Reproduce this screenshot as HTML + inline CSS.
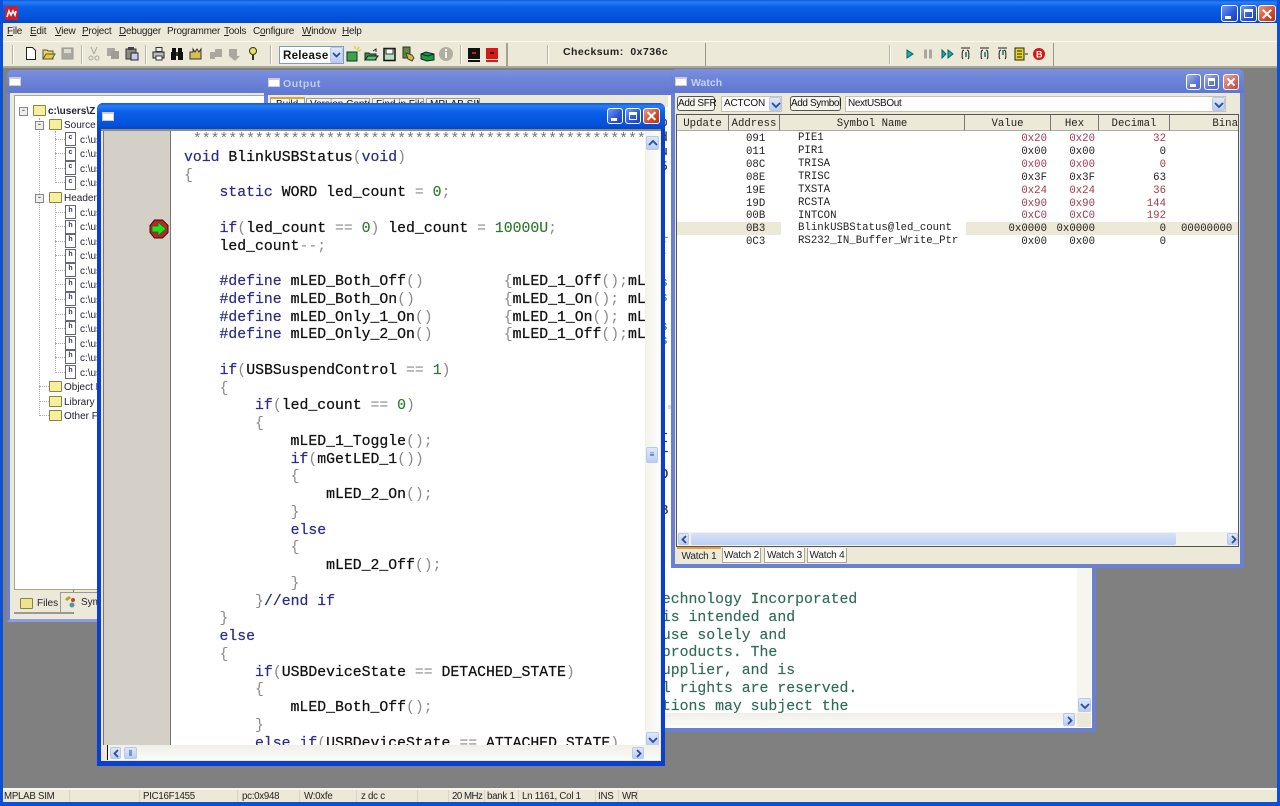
<!DOCTYPE html>
<html><head><meta charset="utf-8"><title>MPLAB IDE</title>
<style>
html,body{margin:0;padding:0;width:1280px;height:806px;overflow:hidden;background:#808080}
*{box-sizing:border-box}
body{position:relative;font-family:"Liberation Sans",sans-serif;font-size:10px;color:#111}
.a{position:absolute;white-space:pre}
.m{font-family:"Liberation Mono",monospace}
.btn{position:absolute;border:1px solid #fff;border-radius:3px;background:linear-gradient(135deg,#6f9bf5,#2a55d8 60%,#1c3fc0)}
.btn.x{background:linear-gradient(135deg,#eb9a80,#d2492a 60%,#b83212)}
.btn.ina{background:linear-gradient(135deg,#a3b4ee,#5e76d6 60%,#5169cf)}
.btn.xina{background:linear-gradient(135deg,#e5a6a0,#d06a62 60%,#b94a48)}
.min:after{content:"";position:absolute;left:3px;bottom:2px;width:6px;height:3px;background:#fff}
.max:after{content:"";position:absolute;left:3px;top:3px;right:3px;bottom:3px;border:1px solid #fff;border-top-width:3px}
.cl:before,.cl:after{content:"";position:absolute;left:2px;right:2px;top:50%;height:2px;margin-top:-1px;background:#fff;transform:rotate(45deg)}
.cl:after{transform:rotate(-45deg)}
.ic{position:absolute;width:12px;height:9px;background:#fff;border:1px solid #ccd;border-top-width:2px}
.t{position:absolute;white-space:pre;font-size:10px;color:#223;margin-top:2px}
.fold{position:absolute;width:13px;height:11px;background:#f5ef9e;border:1px solid #8a8440;border-radius:1px;margin-top:1px}
.doc{position:absolute;width:11px;height:14px;background:#fff;border:1px solid #667;font:bold 7px/9px "Liberation Sans";text-align:center;color:#336}
.pm{position:absolute;width:9px;height:9px;border:1px solid #888;background:#eee;font:9px/6px "Liberation Mono";text-align:center;color:#333;margin-top:1px}
.dh{position:absolute;border-top:1px dotted #aaa;height:0}
.dv{position:absolute;border-left:1px dotted #aaa;width:0}
.code{position:absolute;left:171px;top:131px;width:474px;height:614px;overflow:hidden;background:#fff}
.code pre{position:absolute;left:13px;top:1px;margin:0;font:14.8px/17.75px "Liberation Mono",monospace;color:#111;-webkit-text-stroke:.25px #111}
.code b{font-weight:normal;color:#2b2b88;-webkit-text-stroke:.2px #2b2b88}
.code i{font-style:normal;color:#8a8a8a;-webkit-text-stroke:0}
.code u{text-decoration:none;color:#2a7a2a;-webkit-text-stroke:.15px #2a7a2a}
.code s{text-decoration:none;color:#777;-webkit-text-stroke:0}
.ot{position:absolute;font:14.8px/17.75px "Liberation Mono",monospace;color:#2f6b55;white-space:pre;margin:0;-webkit-text-stroke:.15px #2f6b55}
.sb{position:absolute;border:1px solid #b6c8ee;border-radius:2px;background:linear-gradient(#dfe8fb,#b9cdf5);color:#2c4a96;text-align:center;font:bold 9px/11px "Liberation Sans"}
.hd{position:absolute;top:115px;height:16px;background:#ece9d8;border-right:1px solid #777;border-bottom:1px solid #aaa;font:10.7px/19px "Liberation Mono",monospace;text-align:center;color:#222;overflow:hidden;white-space:pre}
.r{position:absolute;font:10.7px/13px "Liberation Mono",monospace;color:#222;white-space:pre;margin-top:1px}
.rr{color:#a33a4a}
.tab{position:absolute;top:548px;height:15px;background:#fbfaf4;border:1px solid #a9a695;border-top:0;font:10px/15px "Liberation Sans";text-align:center;letter-spacing:-.2px;color:#222}
.st{position:absolute;top:791px;font:9.7px/12px "Liberation Sans";color:#222;white-space:pre;letter-spacing:-.25px}
.sp{position:absolute;top:790px;height:12px;width:1px;background:#d8d5c5}
.mn{position:absolute;top:26px;font:10px/12px "Liberation Sans";color:#222;white-space:pre;letter-spacing:-.25px}
.sep{position:absolute;top:45px;height:19px;width:2px;border-left:1px solid #b5b29f;border-right:1px solid #fff}
svg{position:absolute;overflow:visible}
.sb svg path{fill:none;stroke:#2c4a96;stroke-width:1.8}
</style></head><body>

<!-- main frame -->
<div class="a" style="left:0;top:0;width:1280px;height:23px;background:linear-gradient(#0a5ae0,#2a7df5 10%,#0b5fe8 30%,#0453dc 75%,#0447c8)"></div>
<div class="a" style="left:0;top:0;width:3px;height:806px;background:#0a50d8"></div>
<div class="a" style="right:0;top:0;width:3px;height:806px;background:#0a50d8"></div>
<div class="a" style="left:0;top:802px;width:1280px;height:4px;background:#0a50d8"></div>
<svg style="left:5px;top:5px" width="14" height="15"><rect width="13" height="14" y="1" fill="#c8202c"/><path d="M2 12L4 6l2 4 2-4 2 4 1-4" stroke="#fff" stroke-width="1.6" fill="none"/></svg>
<div class="btn min" style="left:1221px;top:5px;width:17px;height:17px"></div>
<div class="btn max" style="left:1240px;top:5px;width:17px;height:17px"></div>
<div class="btn x cl" style="left:1258px;top:5px;width:18px;height:17px"></div>

<!-- menu -->
<div class="a" style="left:3px;top:23px;width:1274px;height:18px;background:#ece9d8"></div>
<span class="mn" style="left:7px"><span style="text-decoration:underline">F</span>ile</span>
<span class="mn" style="left:30px"><span style="text-decoration:underline">E</span>dit</span>
<span class="mn" style="left:55px"><span style="text-decoration:underline">V</span>iew</span>
<span class="mn" style="left:82px"><span style="text-decoration:underline">P</span>roject</span>
<span class="mn" style="left:119px"><span style="text-decoration:underline">D</span>ebugger</span>
<span class="mn" style="left:167px">Programmer</span>
<span class="mn" style="left:224px"><span style="text-decoration:underline">T</span>ools</span>
<span class="mn" style="left:253px">C<span style="text-decoration:underline">o</span>nfigure</span>
<span class="mn" style="left:302px"><span style="text-decoration:underline">W</span>indow</span>
<span class="mn" style="left:342px"><span style="text-decoration:underline">H</span>elp</span>

<!-- toolbar -->
<div class="a" style="left:3px;top:41px;width:1274px;height:27px;background:#ece9d8;border-top:1px solid #fbfaf3;border-bottom:2px solid #a9a795"></div>
<div class="sep" style="left:12px"></div>
<div class="sep" style="left:81px"></div>
<div class="sep" style="left:145px"></div>
<div class="sep" style="left:270px"></div>
<div class="sep" style="left:460px"></div>
<div class="a" style="left:506px;top:43px;width:2px;height:23px;background:#a5a28f"></div>
<div class="sep" style="left:547px"></div>
<div class="a" style="left:705px;top:43px;width:1px;height:23px;background:#99968a"></div>
<div class="sep" style="left:889px"></div>
<div class="a" style="left:1053px;top:43px;width:1px;height:23px;background:#99968a"></div>

<svg style="left:25px;top:46px" width="240" height="16">
 <path d="M1.500 1.500h6l3 3v9h-9z" fill="#fff" stroke="#222"/>
 <path d="M18 13V4h4l1 1h5v8z" fill="#f0d860" stroke="#554"/><path d="M18 13l3-5h9l-3 5z" fill="#e8c840" stroke="#554"/>
 <rect x="37" y="2" width="11" height="11" fill="#aaa8a0" stroke="#999"/><rect x="39" y="3" width="7" height="4" fill="#dcdad0"/>
 <path d="M66 1l3 7M72 1l-3 7" stroke="#a8a89c"/><circle cx="66" cy="12" r="2" fill="none" stroke="#a8a89c"/><circle cx="72" cy="12" r="2" fill="none" stroke="#a8a89c"/>
 <rect x="82" y="2" width="8" height="8" fill="#aaa89e"/><rect x="86" y="5" width="8" height="8" fill="#9f9d93"/>
 <rect x="101" y="3" width="10" height="10" fill="#8d8b7e" stroke="#333"/><rect x="103" y="1" width="6" height="3" fill="#444"/><rect x="106" y="7" width="7" height="7" fill="#c8ccf0" stroke="#223"/>
 <path d="M128 6h11v6h-11z" fill="#bbb" stroke="#222"/><rect x="131" y="1.500" width="6" height="4" fill="#eee" stroke="#333"/><rect x="131" y="10" width="6" height="4" fill="#fff" stroke="#333"/>
 <rect x="147" y="2" width="4" height="5" fill="#111"/><rect x="153" y="2" width="4" height="5" fill="#111"/><rect x="146" y="6" width="5" height="8" fill="#111"/><rect x="153" y="6" width="5" height="8" fill="#111"/><rect x="151" y="6" width="2" height="4" fill="#333"/>
 <path d="M165 13V6h3v-3l2 3 2-3 2 3 2-3v10z" fill="#d8c050" stroke="#333"/>
 <path d="M185 13V6h5V3h7v8h-7v2z" fill="#aaa89e"/>
 <path d="M204 3h8v7h3l-5 5-6-5z" fill="#aaa89e"/>
 <circle cx="228" cy="5" r="3.500" fill="#e8e060" stroke="#332"/><path d="M228 9v5" stroke="#332" stroke-width="2"/>
</svg>
<div class="a" style="left:279px;top:46px;width:65px;height:18px;background:#fff;border:1px solid #7f9db9;font:bold 11.5px/18px 'Liberation Sans';padding-left:3px;letter-spacing:.3px">Release</div>
<div class="sb" style="left:330px;top:47px;width:13px;height:16px"><svg style="left:1px;top:4px" width="9" height="6"><path d="M1 1l3.500 3.500L8 1"/></svg></div>
<svg style="left:346px;top:45px" width="160" height="18">
 <path d="M1 7h10v9H1z" fill="#3da34a" stroke="#133"/><path d="M11 5l2-3M12 6l3-1M9 4l0-3" stroke="#d8c840" stroke-width="1.400"/>
 <path d="M19 15V8h4l1 1h6v6z" fill="#2f9a44" stroke="#122"/><path d="M19 15l3-4h10l-3 4z" fill="#5cbf6c" stroke="#122"/><path d="M27 6l3-2v3" stroke="#222" fill="none"/>
 <rect x="38" y="3.500" width="11" height="12" fill="#b9dcb9" stroke="#111" stroke-width="1.500"/><rect x="40" y="4" width="7" height="5" fill="#fff" stroke="#333"/>
 <rect x="57" y="2" width="7" height="11" fill="#5b8a3a" stroke="#332"/><path d="M60 8l6 2 2 3-2 3-4-2z" fill="#d4b840" stroke="#443"/>
 <path d="M75 9l5-2 8 2v6l-7 1-6-2z" fill="#1a9a3a" stroke="#123"/><path d="M75 9l7 2 6-2" stroke="#123" fill="none"/>
 <circle cx="100" cy="9" r="7" fill="#b0aea3"/><rect x="99" y="7" width="2" height="6" fill="#f4f3ea"/><rect x="99" y="4" width="2" height="2" fill="#f4f3ea"/>
 <rect x="122" y="3" width="12" height="11" fill="#111"/><rect x="126" y="7" width="4" height="2" fill="#d01818"/><rect x="122" y="15" width="12" height="2" fill="#111"/>
 <rect x="140" y="3" width="12" height="11" fill="#d81818"/><rect x="144" y="7" width="4" height="2" fill="#400"/><rect x="140" y="15" width="12" height="2" fill="#d81818"/>
</svg>
<div class="a" style="left:563px;top:46px;font:bold 10.5px/13px 'Liberation Sans';color:#222;letter-spacing:.45px">Checksum:  0x736c</div>
<svg style="left:905px;top:47px" width="145" height="14">
 <path d="M2 3l6 4-6 4z" fill="#18b0a8" stroke="#06606a"/>
 <rect x="19" y="2.500" width="3" height="9" fill="#aaa89e"/><rect x="24" y="2.500" width="3" height="9" fill="#aaa89e"/>
 <path d="M37 3l4 4-4 4zM43 3l5 4-5 4z" fill="#18b0a8" stroke="#06606a"/>
 <g fill="none" stroke="#222"><path d="M56 1h9M58 12c-2-2 0-4-1-5 1-1-1-3 2-4M63 12c2-2 0-4 1-5-1-1 1-3-2-4"/>
 <path d="M75 1h9M77 12c-2-2 0-4-1-5 1-1-1-3 2-4M82 12c2-2 0-4 1-5-1-1 1-3-2-4"/>
 <path d="M93 1h9M95 12c-2-2 0-4-1-5 1-1-1-3 2-4M100 12c2-2 0-4 1-5-1-1 1-3-2-4"/></g>
 <path d="M61 5v5M80 5v5M98 3v5" stroke="#14706a" stroke-width="1.500"/>
 <rect x="110" y="1" width="9" height="12" fill="#e8d820" stroke="#222"/><path d="M112 4h5M112 7h5M112 10h5M120 7h3" stroke="#222"/>
 <circle cx="134" cy="7" r="6" fill="#d01818"/><text x="131" y="10.500" font-family="Liberation Sans" font-size="9" font-weight="bold" fill="#fff">B</text>
</svg>

<!-- MDI -->
<div class="a" style="left:3px;top:68px;width:1274px;height:720px;background:#808080"></div>
<div class="a" style="left:3px;top:788px;width:1274px;height:14px;background:#ece9d8;border-top:2px solid #f7f6ee"></div>
<span class="st" style="left:4px">MPLAB SIM</span><div class="sp" style="left:69px"></div>
<div class="sp" style="left:139px"></div><span class="st" style="left:143px">PIC16F1455</span>
<div class="sp" style="left:237px"></div><span class="st" style="left:242px">pc:0x948</span>
<div class="sp" style="left:299px"></div><span class="st" style="left:304px">W:0xfe</span>
<div class="sp" style="left:356px"></div><span class="st" style="left:361px">z dc c</span>
<div class="sp" style="left:417px"></div><div class="sp" style="left:448px"></div><span class="st" style="left:452px;letter-spacing:-.5px">20 MHz</span>
<div class="sp" style="left:484px"></div><span class="st" style="left:487px">bank 1</span>
<div class="sp" style="left:518px"></div><span class="st" style="left:522px">Ln 1161, Col 1</span>
<div class="sp" style="left:595px"></div><span class="st" style="left:598px">INS</span>
<div class="sp" style="left:618px"></div><span class="st" style="left:622px">WR</span>
<div class="sp" style="left:637px"></div>

<!-- project window -->
<div class="a" style="left:7px;top:70px;width:270px;height:552px;background:#ece9d8;border:3px solid #6a80d4;border-top:0;border-radius:5px 5px 0 0;border-bottom-color:#8c9ee0"></div>
<div class="a" style="left:7px;top:70px;width:270px;height:23px;background:linear-gradient(#7b90de,#6d84d8 40%,#5f78d0);border-radius:5px 5px 0 0"></div>
<div class="ic" style="left:9px;top:77px"></div>
<div class="a" style="left:14px;top:95px;width:255px;height:495px;background:#fff;border:1px solid #a8a592"></div>

<div class="dv" style="left:39px;top:118px;height:298px"></div>
<div class="dv" style="left:55px;top:131px;height:52px"></div>
<div class="dv" style="left:55px;top:204px;height:169px"></div>
<div class="pm" style="left:19px;top:106px">-</div>
<div class="fold" style="left:33px;top:104px"></div>
<div class="t" style="left:48px;top:104px;font-weight:bold">c:\users\Z</div>
<div class="pm" style="left:35px;top:120px">-</div><div class="fold" style="left:49px;top:118px"></div><div class="t" style="left:64px;top:118px">Source F</div>
<div class="dh" style="left:55px;top:139px;width:10px"></div><div class="doc" style="left:65px;top:132px">c</div><div class="t" style="left:80px;top:133px">c:\us</div>
<div class="dh" style="left:55px;top:153px;width:10px"></div><div class="doc" style="left:65px;top:147px">c</div><div class="t" style="left:80px;top:147px">c:\us</div>
<div class="dh" style="left:55px;top:168px;width:10px"></div><div class="doc" style="left:65px;top:161px">c</div><div class="t" style="left:80px;top:162px">c:\us</div>
<div class="dh" style="left:55px;top:182px;width:10px"></div><div class="doc" style="left:65px;top:176px">c</div><div class="t" style="left:80px;top:176px">c:\us</div>
<div class="pm" style="left:35px;top:193px">-</div><div class="fold" style="left:49px;top:191px"></div><div class="t" style="left:64px;top:191px">Header F</div>
<div class="dh" style="left:55px;top:212px;width:10px"></div><div class="doc" style="left:65px;top:205px">h</div><div class="t" style="left:80px;top:206px">c:\us</div>
<div class="dh" style="left:55px;top:226px;width:10px"></div><div class="doc" style="left:65px;top:220px">h</div><div class="t" style="left:80px;top:220px">c:\us</div>
<div class="dh" style="left:55px;top:241px;width:10px"></div><div class="doc" style="left:65px;top:234px">h</div><div class="t" style="left:80px;top:235px">c:\us</div>
<div class="dh" style="left:55px;top:255px;width:10px"></div><div class="doc" style="left:65px;top:249px">h</div><div class="t" style="left:80px;top:249px">c:\us</div>
<div class="dh" style="left:55px;top:270px;width:10px"></div><div class="doc" style="left:65px;top:263px">h</div><div class="t" style="left:80px;top:264px">c:\us</div>
<div class="dh" style="left:55px;top:284px;width:10px"></div><div class="doc" style="left:65px;top:278px">h</div><div class="t" style="left:80px;top:278px">c:\us</div>
<div class="dh" style="left:55px;top:299px;width:10px"></div><div class="doc" style="left:65px;top:292px">h</div><div class="t" style="left:80px;top:293px">c:\us</div>
<div class="dh" style="left:55px;top:314px;width:10px"></div><div class="doc" style="left:65px;top:307px">h</div><div class="t" style="left:80px;top:308px">c:\us</div>
<div class="dh" style="left:55px;top:328px;width:10px"></div><div class="doc" style="left:65px;top:321px">h</div><div class="t" style="left:80px;top:322px">c:\us</div>
<div class="dh" style="left:55px;top:343px;width:10px"></div><div class="doc" style="left:65px;top:336px">h</div><div class="t" style="left:80px;top:337px">c:\us</div>
<div class="dh" style="left:55px;top:357px;width:10px"></div><div class="doc" style="left:65px;top:350px">h</div><div class="t" style="left:80px;top:351px">c:\us</div>
<div class="dh" style="left:55px;top:372px;width:10px"></div><div class="doc" style="left:65px;top:365px">h</div><div class="t" style="left:80px;top:366px">c:\us</div>
<div class="dh" style="left:39px;top:386px;width:10px"></div><div class="fold" style="left:49px;top:380px"></div><div class="t" style="left:64px;top:380px">Object F</div>
<div class="dh" style="left:39px;top:401px;width:10px"></div><div class="fold" style="left:49px;top:395px"></div><div class="t" style="left:64px;top:395px">Library F</div>
<div class="dh" style="left:39px;top:415px;width:10px"></div><div class="fold" style="left:49px;top:409px"></div><div class="t" style="left:64px;top:409px">Other Fil</div>

<div class="a" style="left:14px;top:590px;width:60px;height:24px;background:#ece9d8;border-right:1px solid #777;border-bottom:2px solid #999"></div>
<div class="fold" style="left:20px;top:597px;background:#efe48e"></div><div class="t" style="left:37px;top:596px">Files</div>
<div class="a" style="left:60px;top:592px;width:50px;height:20px;background:#ece9d8;border:1px solid #999;border-bottom:0"></div>
<svg style="left:64px;top:595px" width="14" height="14"><path d="M1 4l4-3 2 2-4 3z" fill="#b8a020"/><circle cx="9" cy="5" r="2" fill="#c04040"/><circle cx="8" cy="10" r="2.500" fill="#4a9a9a"/></svg>
<div class="t" style="left:81px;top:595px">Sym</div>

<!-- output window -->
<div class="a" style="left:264px;top:70px;width:832px;height:662px;background:#fff;border:4px solid #6a80d4;border-top:0;border-radius:5px 5px 0 0"></div>
<div class="a" style="left:264px;top:70px;width:420px;height:25px;background:linear-gradient(#7b90de,#6d84d8 40%,#5f78d0);border-radius:5px 5px 0 0"></div>
<div class="ic" style="left:268px;top:78px"></div>
<div class="a" style="left:283px;top:78px;font:bold 10.5px/13px 'Liberation Sans';color:#c0cdf0;letter-spacing:.6px">Output</div>
<div class="a" style="left:268px;top:95px;width:400px;height:12px;background:#ece9d8"></div>
<div class="a" style="left:270px;top:97px;width:35px;height:10px;background:#fbfaf4;border:1px solid #999;border-top:2px solid #e8a030;font:10px/12px 'Liberation Sans';padding-left:5px;overflow:hidden">Build</div>
<div class="a" style="left:306px;top:98px;width:64px;height:9px;background:#f3f1e6;border:1px solid #999;font:10px/11px 'Liberation Sans';padding-left:3px;overflow:hidden">Version Control</div>
<div class="a" style="left:372px;top:98px;width:52px;height:9px;background:#f3f1e6;border:1px solid #999;font:10px/11px 'Liberation Sans';padding-left:3px;overflow:hidden">Find in Files</div>
<div class="a" style="left:426px;top:98px;width:54px;height:9px;background:#f3f1e6;border:1px solid #999;font:10px/11px 'Liberation Sans';padding-left:3px;overflow:hidden">MPLAB SIM</div>
<div class="a" style="left:668px;top:405px;width:425px;height:4px;background:#dcdaca"></div>

<!-- strip text fragments between editor and watch -->
<div class="a" style="left:665px;top:104px;width:7px;height:410px;overflow:hidden">
 <pre class="ot" style="left:-5px;top:12px;font-size:13px;line-height:14.5px;color:#223">p
d
u
5</pre>
 <pre class="ot" style="left:-5px;top:122px;font-size:13px;color:#1f7a8a;line-height:14.5px">_
(
</pre>
 <pre class="ot" style="left:-5px;top:172px;font-size:13px;color:#1f7a8a;line-height:14.5px">s
s

s
s</pre>
 <pre class="ot" style="left:-5px;top:326px;color:#223;font-size:14px;line-height:18px">I
T
O

B</pre>
</div>

<!-- output green text -->
<pre class="ot" style="left:653px;top:592px">Technology Incorporated
 is intended and
 use solely and
 products. The
 upplier, and is
 l rights are reserved.
 tions may subject the</pre>
<div class="a" style="left:1077px;top:567px;width:14px;height:146px;background:#f6f5ee"></div>
<div class="sb" style="left:1078px;top:698px;width:13px;height:14px"><svg style="left:1px;top:4px" width="9" height="6"><path d="M1 1l4 4 4-4"/></svg></div>
<div class="a" style="left:664px;top:713px;width:427px;height:14px;background:linear-gradient(#f0efe8,#fbfbf7)"></div>
<div class="sb" style="left:1063px;top:713px;width:12px;height:13px"><svg style="left:3px;top:2px" width="6" height="9"><path d="M1 1l3.500 3.500L1 8"/></svg></div>
<div class="a" style="left:1077px;top:713px;width:14px;height:14px;background:#ece9d8"></div>

<!-- editor -->
<div class="a" style="left:97px;top:103px;width:568px;height:663px;background:#ece9d8;border:4px solid #0a3fd0;border-top:0;border-bottom-width:5px;border-radius:6px 6px 0 0"></div>
<div class="a" style="left:97px;top:103px;width:568px;height:26px;background:linear-gradient(#0a5ae0,#2a7df5 12%,#0b5fe8 35%,#0453dc 80%,#0447c8);border-radius:6px 6px 0 0"></div>
<div class="ic" style="left:102px;top:112px;width:12px;height:9px"></div>
<div class="btn min" style="left:607px;top:108px;width:16px;height:16px"></div>
<div class="btn max" style="left:625px;top:108px;width:16px;height:16px"></div>
<div class="btn x cl" style="left:643px;top:108px;width:17px;height:16px"></div>
<div class="a" style="left:101px;top:129px;width:560px;height:2px;background:#8d8c85"></div>
<div class="a" style="left:103px;top:131px;width:68px;height:614px;background:#d4d0c8;border-left:1px solid #77766e;border-right:1px solid #77766e"></div>
<div class="a" style="left:101px;top:131px;width:2px;height:629px;background:#e9e7dc"></div>
<svg style="left:149px;top:219px" width="20" height="20"><path d="M5.500 1h8L19 6.500v7L13.500 19h-8L1 13.500v-7z" fill="#cc2020" stroke="#301010"/><path d="M3 7h6V3l8 7-8 7v-4H3z" fill="#20e020" stroke="#0c6a20" stroke-width=".8"/></svg>

<div class="code"><pre> <s>****************************************************</s>
<b>void</b> BlinkUSBStatus<i>(</i><b>void</b><i>)</i>
<i>{</i>
    <b>static</b> WORD led_count <i>=</i> <u>0</u><i>;</i>

    <b>if</b><i>(</i>led_count <i>==</i> <u>0</u><i>)</i> led_count <i>=</i> <u>10000U</u><i>;</i>
    led_count<i>--;</i>

    <b>#define</b> mLED_Both_Off<i>()</i>         <i>{</i>mLED_1_Off<i>();</i>mLED_2_Off<i>();}</i>
    <b>#define</b> mLED_Both_On<i>()</i>          <i>{</i>mLED_1_On<i>();</i> mLED_2_On<i>();}</i>
    <b>#define</b> mLED_Only_1_On<i>()</i>        <i>{</i>mLED_1_On<i>();</i> mLED_2_Off<i>();}</i>
    <b>#define</b> mLED_Only_2_On<i>()</i>        <i>{</i>mLED_1_Off<i>();</i>mLED_2_On<i>();}</i>

    <b>if</b><i>(</i>USBSuspendControl <i>==</i> <u>1</u><i>)</i>
    <i>{</i>
        <b>if</b><i>(</i>led_count <i>==</i> <u>0</u><i>)</i>
        <i>{</i>
            mLED_1_Toggle<i>();</i>
            <b>if</b><i>(</i>mGetLED_1<i>())</i>
            <i>{</i>
                mLED_2_On<i>();</i>
            <i>}</i>
            <b>else</b>
            <i>{</i>
                mLED_2_Off<i>();</i>
            <i>}</i>
        <i>}</i><b>//end if</b>
    <i>}</i>
    <b>else</b>
    <i>{</i>
        <b>if</b><i>(</i>USBDeviceState <i>==</i> DETACHED_STATE<i>)</i>
        <i>{</i>
            mLED_Both_Off<i>();</i>
        <i>}</i>
        <b>else if</b><i>(</i>USBDeviceState <i>==</i> ATTACHED_STATE<i>)</i></pre></div>

<div class="a" style="left:645px;top:131px;width:15px;height:614px;background:linear-gradient(90deg,#f3f2ea,#fdfdfa)"></div>
<div class="sb" style="left:646px;top:136px;width:13px;height:14px"><svg style="left:1px;top:3px" width="9" height="6"><path d="M1 5l4-4 4 4"/></svg></div>
<div class="sb" style="left:646px;top:447px;width:12px;height:16px;line-height:14px;font-weight:normal;font-size:8px">≡</div>
<div class="sb" style="left:646px;top:732px;width:13px;height:14px"><svg style="left:1px;top:4px" width="9" height="6"><path d="M1 1l4 4 4-4"/></svg></div>
<div class="a" style="left:107px;top:745px;width:553px;height:15px;background:linear-gradient(#f0efe8,#fbfbf7);border-left:1px solid #111"></div>
<div class="sb" style="left:110px;top:747px;width:11px;height:12px"><svg style="left:2px;top:1px" width="6" height="9"><path d="M5 1L1.500 4.500 5 8"/></svg></div>
<div class="sb" style="left:124px;top:747px;width:13px;height:12px;font-weight:normal;font-size:8px">⦀</div>
<div class="sb" style="left:632px;top:747px;width:12px;height:12px"><svg style="left:3px;top:1px" width="6" height="9"><path d="M1 1l3.500 3.500L1 8"/></svg></div>

<!-- watch window -->
<div class="a" style="left:671px;top:69px;width:573px;height:499px;background:#ece9d8;border:4px solid #6a80d4;border-top:0;border-bottom-width:4px;border-radius:6px 6px 0 0"></div>
<div class="a" style="left:671px;top:69px;width:573px;height:24px;background:linear-gradient(#7b90de,#6d84d8 40%,#5f78d0);border-radius:6px 6px 0 0"></div>
<div class="ic" style="left:675px;top:77px"></div>
<div class="a" style="left:691px;top:77px;font:bold 10.5px/13px 'Liberation Sans';color:#c6d2f2">Watch</div>
<div class="btn ina min" style="left:1186px;top:74px;width:15px;height:16px"></div>
<div class="btn ina max" style="left:1204px;top:74px;width:15px;height:16px"></div>
<div class="btn xina cl" style="left:1223px;top:74px;width:16px;height:16px"></div>

<div class="a" style="left:677px;top:96px;width:38px;height:15px;background:#f6f5ee;border:1px solid #555;border-radius:3px;font:10px/13px 'Liberation Sans';text-align:center;letter-spacing:-.3px">Add SFR</div>
<div class="a" style="left:721px;top:96px;width:61px;height:16px;background:#fff;border:1px solid #c5c2b0;font:10px/14px 'Liberation Sans';padding-left:2px;letter-spacing:-.2px">ACTCON</div>
<div class="sb" style="left:769px;top:97px;width:12px;height:14px"><svg style="left:1px;top:4px" width="9" height="6"><path d="M1 1l4 4 4-4"/></svg></div>
<div class="a" style="left:790px;top:96px;width:51px;height:15px;background:#f6f5ee;border:1px solid #555;border-radius:3px;font:10px/13px 'Liberation Sans';text-align:center;letter-spacing:-.4px">Add Symbol</div>
<div class="a" style="left:845px;top:96px;width:381px;height:16px;background:#fff;border:1px solid #c5c2b0;font:10px/14px 'Liberation Sans';padding-left:2px;letter-spacing:-.4px">NextUSBOut</div>
<div class="sb" style="left:1212px;top:97px;width:13px;height:14px"><svg style="left:1px;top:4px" width="9" height="6"><path d="M1 1l4 4 4-4"/></svg></div>

<div class="a" style="left:676px;top:114px;width:563px;height:433px;background:#fff;border:1px solid #555"></div>
<div class="hd" style="left:677px;width:52px">Update</div>
<div class="hd" style="left:729px;width:51px">Address</div>
<div class="hd" style="left:780px;width:185px">Symbol Name</div>
<div class="hd" style="left:965px;width:86px">Value</div>
<div class="hd" style="left:1051px;width:48px">Hex</div>
<div class="hd" style="left:1099px;width:71px">Decimal</div>
<div class="hd" style="left:1170px;width:68px;text-align:right;padding-right:0;border-right:0">Bina</div>

<div class="a" style="left:677px;top:222px;width:561px;height:13px;background:#ece9d8"></div>
<div class="a" style="left:781px;top:222px;width:185px;height:13px;background:#fff"></div>

<div class="r" style="left:746px;top:132px">091</div><div class="r" style="left:798px;top:131px">PIE1</div><div class="r rr" style="right:233px;top:132px">0x20</div><div class="r rr" style="right:185px;top:132px">0x20</div><div class="r rr" style="right:114px;top:132px">32</div>
<div class="r" style="left:746px;top:145px">011</div><div class="r" style="left:798px;top:144px">PIR1</div><div class="r" style="right:233px;top:145px">0x00</div><div class="r" style="right:185px;top:145px">0x00</div><div class="r" style="right:114px;top:145px">0</div>
<div class="r" style="left:746px;top:158px">08C</div><div class="r" style="left:798px;top:157px">TRISA</div><div class="r rr" style="right:233px;top:158px">0x00</div><div class="r rr" style="right:185px;top:158px">0x00</div><div class="r rr" style="right:114px;top:158px">0</div>
<div class="r" style="left:746px;top:171px">08E</div><div class="r" style="left:798px;top:170px">TRISC</div><div class="r" style="right:233px;top:171px">0x3F</div><div class="r" style="right:185px;top:171px">0x3F</div><div class="r" style="right:114px;top:171px">63</div>
<div class="r" style="left:746px;top:184px">19E</div><div class="r" style="left:798px;top:183px">TXSTA</div><div class="r rr" style="right:233px;top:184px">0x24</div><div class="r rr" style="right:185px;top:184px">0x24</div><div class="r rr" style="right:114px;top:184px">36</div>
<div class="r" style="left:746px;top:197px">19D</div><div class="r" style="left:798px;top:196px">RCSTA</div><div class="r rr" style="right:233px;top:197px">0x90</div><div class="r rr" style="right:185px;top:197px">0x90</div><div class="r rr" style="right:114px;top:197px">144</div>
<div class="r" style="left:746px;top:209px">00B</div><div class="r" style="left:798px;top:209px">INTCON</div><div class="r rr" style="right:233px;top:209px">0xC0</div><div class="r rr" style="right:185px;top:209px">0xC0</div><div class="r rr" style="right:114px;top:209px">192</div>
<div class="r" style="left:746px;top:222px">0B3</div><div class="r" style="left:798px;top:221px">BlinkUSBStatus@led_count</div><div class="r" style="right:233px;top:222px">0x0000</div><div class="r" style="right:185px;top:222px">0x0000</div><div class="r" style="right:114px;top:222px">0</div><div class="r" style="left:1181px;top:222px">00000000</div>
<div class="r" style="left:746px;top:235px">0C3</div><div class="r" style="left:798px;top:234px">RS232_IN_Buffer_Write_Ptr</div><div class="r" style="right:233px;top:235px">0x00</div><div class="r" style="right:185px;top:235px">0x00</div><div class="r" style="right:114px;top:235px">0</div>

<div class="a" style="left:677px;top:532px;width:561px;height:14px;background:#f3f2ea"></div>
<div class="a" style="left:691px;top:533px;width:485px;height:12px;background:linear-gradient(#d5e1f9,#bccff5);border-radius:2px"></div>
<div class="sb" style="left:678px;top:533px;width:11px;height:12px"><svg style="left:2px;top:1px" width="6" height="9"><path d="M5 1L1.500 4.500 5 8"/></svg></div>
<div class="sb" style="left:1227px;top:533px;width:11px;height:12px"><svg style="left:3px;top:1px" width="6" height="9"><path d="M1 1l3.500 3.500L1 8"/></svg></div>
<div class="tab" style="left:677px;width:44px;top:547px;height:16px;background:#ece9d8;border:0;border-top:2px solid #e8a030">Watch 1</div>
<div class="tab" style="left:722px;width:39px">Watch 2</div>
<div class="tab" style="left:764px;width:41px">Watch 3</div>
<div class="tab" style="left:807px;width:40px">Watch 4</div>

</body></html>
